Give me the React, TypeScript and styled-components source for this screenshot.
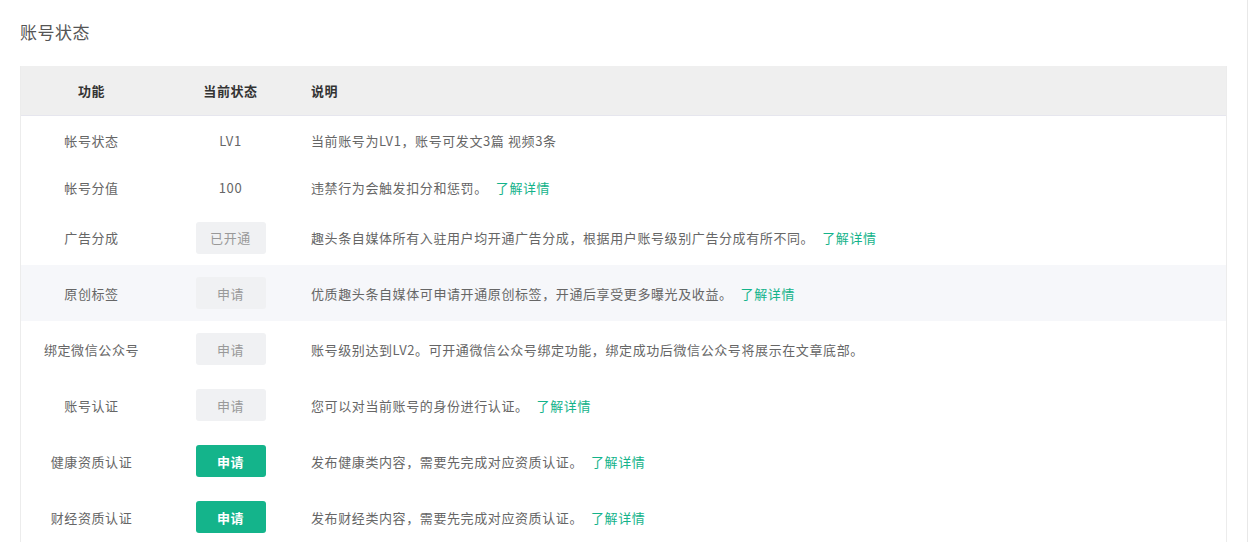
import React from "react";
import styled, { createGlobalStyle } from "styled-components";

const G = createGlobalStyle`
  body { margin: 0; background: #fff; font-family: "Noto Sans CJK SC", "Liberation Sans", sans-serif; }
`;
const Page = styled.div`
  width: 1248px; border-right: 1px solid #e8e8e8; box-sizing: border-box;
  padding: 19px 20px 0 20px; height: 542px; overflow: hidden;
`;
const Title = styled.div`font-size: 17px; color: #555; line-height: 26px; margin-bottom: 21px; letter-spacing: 0.5px;`;
const Table = styled.div`border-left: 1px solid #ececec; border-right: 1px solid #ececec;`;
const Row = styled.div<{ $h: number; $bg?: string; $head?: boolean }>`
  display: grid; grid-template-columns: 141px 137px 1fr; align-items: center;
  height: ${p => p.$h}px; background: ${p => p.$bg || "#fff"};
  font-size: 13px; letter-spacing: 0.6px; color: ${p => (p.$head ? "#333" : "#666")};
  font-weight: ${p => (p.$head ? 700 : 400)};
  border-bottom: ${p => (p.$head ? "1px solid #e6e6ee" : "none")};
`;
const C = styled.div`text-align: center;`;
const D = styled.div`padding-left: 12px;`;
const Link = styled.span`color: #13b38a; margin-left: 8px;`;
const Btn = styled.div<{ $on?: boolean }>`
  width: 70px; height: 32px; margin: 0 auto; border-radius: 3px;
  display: flex; align-items: center; justify-content: center;
  background: ${p => (p.$on ? "#14b48b" : "#f0f1f3")};
  color: ${p => (p.$on ? "#fff" : "#999")}; font-weight: ${p => (p.$on ? 700 : 400)};
`;

const rows: [string, React.ReactNode, string, boolean, number, string?][] = [
  ["帐号状态", "LV1", "当前账号为LV1，账号可发文3篇 视频3条", false, 48],
  ["帐号分值", "100", "违禁行为会触发扣分和惩罚。", true, 46],
  ["广告分成", <Btn>已开通</Btn>, "趣头条自媒体所有入驻用户均开通广告分成，根据用户账号级别广告分成有所不同。", true, 55],
  ["原创标签", <Btn>申请</Btn>, "优质趣头条自媒体可申请开通原创标签，开通后享受更多曝光及收益。", true, 56, "#f6f7fa"],
  ["绑定微信公众号", <Btn>申请</Btn>, "账号级别达到LV2。可开通微信公众号绑定功能，绑定成功后微信公众号将展示在文章底部。", false, 56],
  ["账号认证", <Btn>申请</Btn>, "您可以对当前账号的身份进行认证。", true, 56],
  ["健康资质认证", <Btn $on>申请</Btn>, "发布健康类内容，需要先完成对应资质认证。", true, 56],
  ["财经资质认证", <Btn $on>申请</Btn>, "发布财经类内容，需要先完成对应资质认证。", true, 56],
];

export default function App() {
  return (
    <Page>
      <G />
      <Title>账号状态</Title>
      <Table>
        <Row $h={49} $bg="#efefef" $head>
          <C>功能</C><C>当前状态</C><D>说明</D>
        </Row>
        {rows.map(([a, b, c, l, h, bg], i) => (
          <Row key={i} $h={h} $bg={bg}>
            <C>{a}</C><C>{b}</C>
            <D>{c}{l && <Link>了解详情</Link>}</D>
          </Row>
        ))}
      </Table>
    </Page>
  );
}
